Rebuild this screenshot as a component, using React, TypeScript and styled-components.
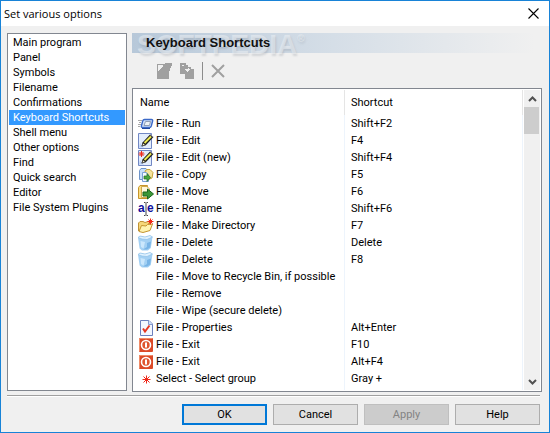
import React, { useState } from "react";
import styled, { createGlobalStyle, css } from "styled-components";

const GlobalStyle = createGlobalStyle`
  * { box-sizing: border-box; }
  body { margin: 0; font-family: Roboto, "Liberation Sans", sans-serif; font-size: 11px; color: #000; }
  button { font: inherit; color: inherit; margin: 0; padding: 0; }
  svg { display: block; }
`;

const Dialog = styled.main`
  min-height: 100vh;
  display: flex;
  flex-direction: column;
  background: #f0f0f0;
  border: 1px solid #1883d7;
`;

const TitleBar = styled.header`
  height: 25px;
  display: flex;
  align-items: center;
  justify-content: space-between;
  padding: 0 10px 0 3px;
  background: #fff;
`;

const Title = styled.h1`
  margin: 0;
  font: 400 11px/16px "Open Sans", sans-serif;
`;

const CloseButton = styled.button`
  border: 0;
  background: none;
`;

const Content = styled.div`
  flex: 1;
  display: flex;
  align-items: stretch;
  gap: 5px;
  padding: 7px 7px 3px 6px;
`;

const Categories = styled.ul`
  list-style: none;
  width: 120px;
  flex: none;
  margin: 0 0 1px;
  padding: 1px;
  background: #fff;
  border: 1px solid #828790;
`;

const Category = styled.button<{ $selected: boolean }>`
  display: block;
  width: 100%;
  height: 15px;
  padding: 0 4px;
  border: 0;
  text-align: left;
  line-height: 15px;
  white-space: nowrap;
  background: ${(p) => (p.$selected ? "#3399ff" : "transparent")};
  color: ${(p) => (p.$selected ? "#fff" : "#000")};
`;

const Page = styled.section`
  flex: 1;
  min-width: 0;
  display: flex;
  flex-direction: column;
`;

const Banner = styled.div`
  position: relative;
  height: 20px;
  margin-right: 7px;
  background: linear-gradient(90deg, #b7c8d9, #d5dee7 50%, #f0f0f0);
`;

const Watermark = styled.span`
  position: absolute;
  left: 5px;
  top: -4px;
  font: 700 28px/32px "Liberation Sans", sans-serif;
  color: rgba(240, 243, 246, 0.5);
  text-shadow: 1px 2px 2px rgba(110, 120, 130, 0.22);
  pointer-events: none;

  sup { font-size: 10px; line-height: 10px; vertical-align: 12px; }
`;

const PageTitle = styled.h2`
  position: relative;
  margin: 0;
  padding-left: 14px;
  font: 700 13px/20px "Liberation Sans", sans-serif;
  color: #111;
`;

const Tools = styled.div`
  height: 35px;
  display: flex;
  align-items: center;
  padding: 0 0 0 24px;
  gap: 7px;
`;

const ToolButton = styled.button`
  border: 0;
  background: none;
  color: #a0a0a0;
`;

const ToolSeparator = styled.span`
  width: 1px;
  height: 18px;
  background: #8c8c8c;
`;

const ListPanel = styled.div`
  flex: 1;
  display: flex;
  gap: 1px;
  padding: 1px;
  background: #fff;
  border: 1px solid #828790;
`;

const Table = styled.table`
  flex: 1;
  align-self: flex-start;
  border-collapse: separate;
  border-spacing: 0;
  table-layout: fixed;
  height: 100%;
`;

const cell = css`
  padding: 0 6px;
  text-align: left;
  white-space: nowrap;
  font-weight: 400;
`;

const HeadCell = styled.th`
  ${cell}
  height: 25px;
  border-right: 1px solid #e5e5e5;
  &:first-child { width: 211px; }
`;

const Cell = styled.td`
  ${cell}
  height: 17px;
  border-right: 1px solid #edf4fc;
  &:first-child { padding-left: 4px; }
`;

const Command = styled.span`
  display: grid;
  grid-template-columns: 16px 1fr;
  column-gap: 2px;
  align-items: center;
  height: 17px;
`;

const Filler = styled.td`
  padding: 0;
  border-right: 1px solid #edf4fc;
`;

const ScrollBar = styled.div`
  width: 16px;
  flex: none;
  display: flex;
  flex-direction: column;
  background: #f0f0f0;
`;

const ScrollButton = styled.button`
  height: 17px;
  border: 0;
  background: none;
  display: grid;
  place-items: center;
`;

const Track = styled.div`
  flex: 1;
`;

const Thumb = styled.div`
  height: 27px;
  margin-right: 1px;
  background: #cdcdcd;
`;

const Footer = styled.footer`
  display: flex;
  justify-content: flex-end;
  gap: 6px;
  margin: 0 9px 0 6px;
  padding: 8px 0 7px;
  border-top: 1px solid #a0a0a0;
  box-shadow: inset 0 1px #fff;
`;

const ActionButton = styled.button<{ $primary?: boolean }>`
  width: 85px;
  height: 21px;
  background: #e1e1e1;
  border: ${(p) => (p.$primary ? "2px solid #0078d7" : "1px solid #adadad")};
  &:disabled { background: #cccccc; border-color: #bfbfbf; color: #838383; }
`;

type IconName = "run" | "edit" | "new" | "copy" | "move" | "rename" | "folder" | "bin" | "check" | "exit" | "star" | "none";

const Spark = ({ x, y, r = 3 }: { x: number; y: number; r?: number }) => (
  <path
    d={`M${x - r} ${y}H${x + r}M${x} ${y - r}V${y + r}M${x - r + 1} ${y - r + 1}L${x + r - 1} ${y + r - 1}M${x + r - 1} ${y - r + 1}L${x - r + 1} ${y + r - 1}`}
    stroke="#f02818"
    fill="none"
  />
);

const EditArt = () => (
  <>
    <path d="M.5 .5H13.5V15.5H.5Z" fill="#e3edfc" stroke="#7187c4" />
    <path d="M2 10L6 14.5H1Z" fill="#bcd2f7" />
    <path d="M3.5 13.5L4.5 9.5L12 1.5L15.5 4L8 12Z" fill="#1a1a1a" />
    <path d="M6.5 10L13 3.5" stroke="#ece94e" strokeWidth="2" />
    <path d="M4 13L5 10L7.5 12Z" fill="#f8f2d0" stroke="#222" strokeWidth=".6" />
    <path d="M12 1.5L15 4" stroke="#8c8c94" />
  </>
);

const art: Record<IconName, React.ReactNode> = {
  none: null,
  run: (
    <>
      <path d="M0 4.5H4M1 6.5H3M0 8.5H3M0 10.5H2" stroke="#a8a8a8" />
      <path d="M6.5 3.5H13.5Q15 3.5 14.6 5L13.3 10Q12.8 11.5 11.5 11.5H4.5Q3 11.5 3.4 10L4.7 5Q5.2 3.5 6.5 3.5Z" fill="#cfe0fa" stroke="#3c69c8" strokeWidth="1.4" />
      <path d="M7.5 5.5H12.5L11.5 9.5H6Z" fill="#edf2f7" stroke="#8d9cb4" />
      <path d="M4 12.5H12" stroke="#1f479c" />
    </>
  ),
  edit: <EditArt />,
  new: (
    <>
      <EditArt />
      <Spark x={3.5} y={4} />
    </>
  ),
  copy: (
    <>
      <path d="M1.5 3.5L3 1.5H8L10 4V12.5H1.5Z" fill="#c8dff9" stroke="#6d93c9" />
      <path d="M7 4L9 2.5H12L15 5.5L14 11L9 13Z" fill="#f5e39b" stroke="#c7a43c" />
      <path d="M4.5 5.5H8.5L10.5 8V14.5H4.5Z" fill="#f2f8ff" stroke="#7a9fd4" />
      <path d="M6 9H9V6.5L12.5 10.5L9 14.5V12H6Z" fill="#47a63c" stroke="#246c24" strokeWidth=".7" />
    </>
  ),
  move: (
    <>
      <path d="M.5 3.5L2 1.5H9.5V14.5H.5Z" fill="#f9dd83" stroke="#c6942a" />
      <path d="M3.5 2.5H9L11.5 5V13.5H3.5Z" fill="#fff8dc" stroke="#cfaa4c" />
      <path d="M5 8H9.5V5L15.5 10L9.5 15V12H5Z" fill="#3b9637" stroke="#1c661f" />
    </>
  ),
  rename: (
    <>
      <text x="0" y="11" fontFamily="Liberation Sans, sans-serif" fontSize="12" fontWeight="700" fill="#10109c">a</text>
      <text x="9" y="11" fontFamily="Liberation Sans, sans-serif" fontSize="12" fontWeight="700" fill="#10109c">e</text>
      <path d="M6 1.5H7.5M8.5 1.5H10M8 2V14M6 14.5H7.5M8.5 14.5H10" stroke="#444" />
    </>
  ),
  folder: (
    <>
      <path d="M.5 13V5L2 3.5H5L7 4.5L11.5 3V8" fill="#f5d779" stroke="#c09236" />
      <path d="M1 13.5L3.5 7.5L8 8L9.5 6.5L14.5 6L12 12.5L5 14.5Z" fill="#fff3b0" stroke="#c4952f" />
      <Spark x={12.5} y={3.5} />
    </>
  ),
  bin: (
    <>
      <path d="M0 2.5L2 1L7 2L12 .5L14.5 2L12.8 13L10 15.5H4L1.6 13.5Z" fill="#a3d0f3" />
      <path d="M0 2.5L2 1L7 2L12 .5L14.5 2L9 4.5L4 4Z" fill="#e0f2ff" stroke="#8fc0e6" strokeWidth=".7" />
      <path d="M2.5 6L7 7L5.5 13.5L3 12Z" fill="#cbe7fc" />
      <path d="M9 8L13 6.5L12 12.5L9 14.5H5L9 12Z" fill="#78b4e6" />
    </>
  ),
  check: (
    <>
      <path d="M2.5 .5H11L14.5 4V15.5H2.5Z" fill="#f2f7ff" stroke="#6c80bd" />
      <path d="M10.5 .5V4.5H14.5" fill="#cfe0fa" stroke="#8499cd" />
      <path d="M5 8.5L7 11.5L11.5 5.5" fill="none" stroke="#e53722" strokeWidth="2" />
    </>
  ),
  exit: (
    <>
      <rect x="1" y="1" width="14" height="14" rx="1" fill="#dc4a28" />
      <path d="M1.5 14V1.5H14" stroke="#f08c68" fill="none" />
      <circle cx="8" cy="8" r="4.5" fill="#e0552f" stroke="#fff" strokeWidth="1.6" />
      <path d="M8 5.5V10.5" stroke="#fff" strokeWidth="2" />
    </>
  ),
  star: <Spark x={8.5} y={8.5} r={4} />,
};

const commands: [IconName, string, string][] = [
  ["run", "File - Run", "Shift+F2"],
  ["edit", "File - Edit", "F4"],
  ["new", "File - Edit (new)", "Shift+F4"],
  ["copy", "File - Copy", "F5"],
  ["move", "File - Move", "F6"],
  ["rename", "File - Rename", "Shift+F6"],
  ["folder", "File - Make Directory", "F7"],
  ["bin", "File - Delete", "Delete"],
  ["bin", "File - Delete", "F8"],
  ["none", "File - Move to Recycle Bin, if possible", ""],
  ["none", "File - Remove", ""],
  ["none", "File - Wipe (secure delete)", ""],
  ["check", "File - Properties", "Alt+Enter"],
  ["exit", "File - Exit", "F10"],
  ["exit", "File - Exit", "Alt+F4"],
  ["star", "Select - Select group", "Gray +"],
];

const categories = [
  "Main program", "Panel", "Symbols", "Filename", "Confirmations", "Keyboard Shortcuts",
  "Shell menu", "Other options", "Find", "Quick search", "Editor", "File System Plugins",
];

export default function App() {
  const [selected, setSelected] = useState("Keyboard Shortcuts");
  return (
    <>
      <GlobalStyle />
      <Dialog>
        <TitleBar>
          <Title>Set various options</Title>
          <CloseButton aria-label="Close">
            <svg width="11" height="11" viewBox="0 0 11 11">
              <path d="M.5 .5L10.5 10.5M10.5 .5L.5 10.5" stroke="#000" strokeWidth="1.1" />
            </svg>
          </CloseButton>
        </TitleBar>
        <Content>
          <Categories>
            {categories.map((name) => (
              <li key={name}>
                <Category $selected={name === selected} onClick={() => setSelected(name)}>{name}</Category>
              </li>
            ))}
          </Categories>
          <Page>
            <Banner>
              <Watermark aria-hidden="true">SOFTPEDIA<sup>®</sup></Watermark>
              <PageTitle>Keyboard Shortcuts</PageTitle>
            </Banner>
            <Tools>
              <ToolButton aria-label="New shortcut">
                <svg width="16" height="16" viewBox="0 0 16 16" fill="currentColor" shapeRendering="crispEdges">
                  <path d="M1 1H9V0H16V3H15V5H14V8H13V16H1ZM2 2V8H3V7H4V6H5V5H6V4H7V2Z" fillRule="evenodd" />
                </svg>
              </ToolButton>
              <ToolButton aria-label="Copy shortcut">
                <svg width="16" height="16" viewBox="0 0 16 16" fill="currentColor" shapeRendering="crispEdges">
                  <path d="M1 0H7V2H9V4H12V6H15V16H6V11H1ZM3 2V3H5V2ZM6 7H7V8H8V9H9V8H10V7H11V6H10V5H9V6H6Z" fillRule="evenodd" />
                </svg>
              </ToolButton>
              <ToolSeparator />
              <ToolButton aria-label="Delete shortcut">
                <svg width="16" height="16" viewBox="0 0 16 16">
                  <path d="M2 2L14 14M14 2L2 14" stroke="currentColor" strokeWidth="2" />
                </svg>
              </ToolButton>
            </Tools>
            <ListPanel>
              <Table>
                <thead>
                  <tr>
                    <HeadCell scope="col">Name</HeadCell>
                    <HeadCell scope="col">Shortcut</HeadCell>
                  </tr>
                </thead>
                <tbody>
                  {commands.map(([icon, name, keys], i) => (
                    <tr key={i}>
                      <Cell>
                        <Command>
                          <svg width="16" height="16" viewBox="0 0 16 16">{art[icon]}</svg>
                          {name}
                        </Command>
                      </Cell>
                      <Cell>{keys}</Cell>
                    </tr>
                  ))}
                  <tr>
                    <Filler />
                    <Filler />
                  </tr>
                </tbody>
              </Table>
              <ScrollBar>
                <ScrollButton aria-label="Scroll up">
                  <svg width="9" height="6" viewBox="0 0 9 6"><path d="M1 5L4.5 1.5L8 5" fill="none" stroke="#505050" strokeWidth="2" /></svg>
                </ScrollButton>
                <Track><Thumb /></Track>
                <ScrollButton aria-label="Scroll down">
                  <svg width="9" height="6" viewBox="0 0 9 6"><path d="M1 1L4.5 4.5L8 1" fill="none" stroke="#505050" strokeWidth="2" /></svg>
                </ScrollButton>
              </ScrollBar>
            </ListPanel>
          </Page>
        </Content>
        <Footer>
          <ActionButton $primary>OK</ActionButton>
          <ActionButton>Cancel</ActionButton>
          <ActionButton disabled>Apply</ActionButton>
          <ActionButton>Help</ActionButton>
        </Footer>
      </Dialog>
    </>
  );
}
